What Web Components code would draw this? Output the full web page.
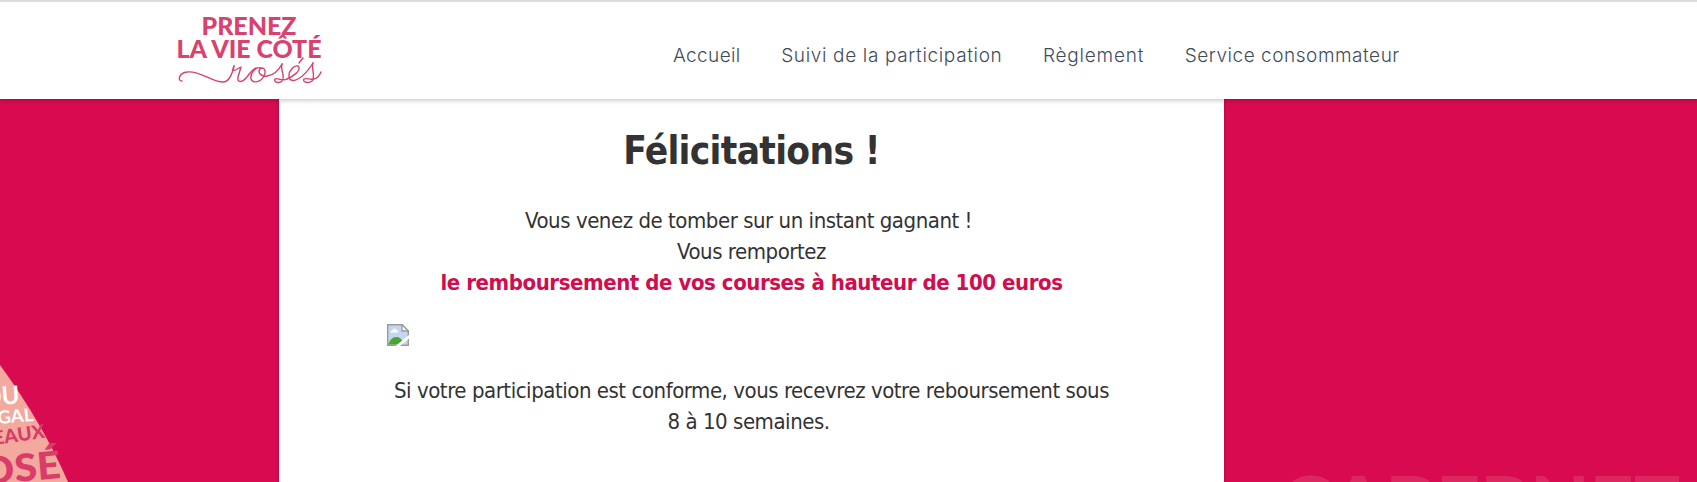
<!DOCTYPE html>
<html lang="fr">
<head>
<meta charset="utf-8">
<title>Prenez la vie côté rosés</title>
<style>
body {
  margin: 0;
  height: 482px;
  overflow: hidden;
  background: #d80b50;
}
</style>
</head>
<body>
<contest-page>
  <site-header slot="header">
    <nav-link href="#" spacing=".38px">Accueil</nav-link>
    <nav-link href="#" spacing=".65px">Suivi de la participation</nav-link>
    <nav-link href="#" spacing=".8px">Règlement</nav-link>
    <nav-link href="#" spacing=".53px">Service consommateur</nav-link>
  </site-header>
  <win-card title-text="Félicitations !">
    <text-line>Vous venez de tomber sur un instant gagnant !&nbsp;</text-line>
    <text-line>Vous remportez</text-line>
    <text-line strong>le remboursement de vos courses à hauteur de 100 euros</text-line>
    <missing-image></missing-image>
    <text-line>Si votre participation est conforme, vous recevrez votre reboursement sous</text-line>
    <text-line>8 à 10 semaines.&nbsp;</text-line>
  </win-card>
</contest-page>

<script>
class ContestPage extends HTMLElement {
  constructor() {
    super();
    this.attachShadow({ mode: "open" }).innerHTML = `
      <style>
      :host {
        display: flex;
        flex-direction: column;
        position: relative;
        height: 482px;
        overflow: hidden;
      }
      main {
        flex: 1;
        display: flex;
        padding-left: 279px;
      }
      bottle-art, grape-art {
        position: absolute;
        bottom: 0;
      }
      bottle-art { left: 0; }
      grape-art { right: 0; }
      </style>
      <bottle-art></bottle-art>
      <grape-art></grape-art>
      <slot name="header"></slot>
      <main><slot></slot></main>
    `;
  }
}

class SiteHeader extends HTMLElement {
  constructor() {
    super();
    this.attachShadow({ mode: "open" }).innerHTML = `
      <style>
      :host {
        display: flex;
        position: relative;
        z-index: 1;
        box-sizing: border-box;
        height: 99px;
        padding-left: 176px;
        border-top: 2px solid #dcdcdc;
        background: #fff;
        box-shadow: 0 1px 5px rgba(0, 0, 0, .25);
      }
      nav {
        display: flex;
        gap: 40.5px;
        margin-left: 351px;
        padding-top: 42px;
      }
      </style>
      <brand-logo></brand-logo>
      <nav><slot></slot></nav>
    `;
  }
}

class NavLink extends HTMLElement {
  constructor() {
    super();
    this.attachShadow({ mode: "open" }).innerHTML = `
      <style>
      :host { display: block; }
      a {
        color: #3f4d5a;
        font: 300 19px/24px Inter, sans-serif;
        text-decoration: none;
        white-space: nowrap;
      }
      </style>
      <a><slot></slot></a>
    `;
  }
  connectedCallback() {
    const link = this.shadowRoot.querySelector("a");
    link.href = this.getAttribute("href");
    link.style.letterSpacing = this.getAttribute("spacing");
  }
}

class BrandLogo extends HTMLElement {
  constructor() {
    super();
    this.attachShadow({ mode: "open" }).innerHTML = `
      <style>
      :host { display: block; width: 146px; height: 97px; }
      svg { display: block; }
      text { font: 900 24px Lato, sans-serif; fill: #d9416e; }
      path { fill: none; stroke: #d9416e; stroke-width: 1.4; stroke-linecap: round; stroke-linejoin: round; }
      </style>
      <svg width="146" height="97" viewBox="176 2 146 97">
        <text x="201.500" y="34.500" textLength="95" lengthAdjust="spacingAndGlyphs">PRENEZ</text>
        <text x="176.500" y="58" textLength="145" lengthAdjust="spacingAndGlyphs">LA VIE CÔTÉ</text>
        <path d="M182 81C177 81 179 73 187 72C199 70 212 82 223 82C229 82 232 75 234 66"/>
        <path d="M234 66C231 73 236 70 241 67L238 77C237 83 242 83 247 77C250 73 252 70 256 68"/>
        <path d="M261 68C256 66 250 73 251 79C253 84 261 82 264 76C267 70 263 66 260 69C257 73 262 77 267 76C274 75 279 70 282 64"/>
        <path d="M282 64C280 70 286 77 282 81C279 84 273 82 275 79C277 77 282 82 287 79"/>
        <path d="M287 79C294 76 300 71 299 67C297 63 288 70 289 77C291 85 303 79 313 63"/>
        <path d="M299 63L303 58M313 63C311 69 316 77 312 81C308 84 302 82 304 79C307 77 316 84 321 72"/>
      </svg>
    `;
  }
}

class WinCard extends HTMLElement {
  constructor() {
    super();
    this.attachShadow({ mode: "open" }).innerHTML = `
      <style>
      :host {
        display: block;
        box-sizing: border-box;
        width: 945px;
        padding: 29px 108px 0;
        background: #fff;
        box-shadow: 0 0 3px rgba(0, 0, 0, .3);
        color: #333;
        font-family: "DejaVu Sans Condensed", "DejaVu Sans", sans-serif;
        font-stretch: condensed;
      }
      h1 {
        margin: 0 0 31px;
        font-size: 38.5px;
        line-height: 46px;
        letter-spacing: -.7px;
        text-align: center;
      }
      </style>
      <h1></h1>
      <slot></slot>
    `;
  }
  connectedCallback() {
    this.shadowRoot.querySelector("h1").textContent = this.getAttribute("title-text");
  }
}

class TextLine extends HTMLElement {
  constructor() {
    super();
    this.attachShadow({ mode: "open" }).innerHTML = `
      <style>
      :host {
        display: flex;
        justify-content: center;
        font-size: 22px;
        line-height: 31px;
        letter-spacing: -.46px;
        white-space: nowrap;
      }
      :host([strong]) {
        color: #d00d4e;
        font-weight: bold;
        letter-spacing: -.44px;
      }
      </style>
      <span><slot></slot></span>
    `;
  }
}

class MissingImage extends HTMLElement {
  constructor() {
    super();
    this.attachShadow({ mode: "open" }).innerHTML = `
      <style>
      :host { display: block; padding: 26px 0 29px; }
      svg { display: block; }
      </style>
      <svg width="22" height="22" viewBox="0 0 22 22">
        <path d="M.7.700H15l6.300 6.300v14.300H.700z" fill="#c5d6f2" stroke="#9b9b9b" stroke-width="1.400"/>
        <path d="M3.500 8.500c0-2 2-2 2.500-3 1-2 3.500-1 3.500.800 2 0 2 2.200 1 2.200z" fill="#fff"/>
        <path d="M1.400 20.600c1-4 4-7.600 8-7.600 3 0 5 2 6 4l-4 3.600z" fill="#4aa52f"/>
        <path d="M15 .700v6.300h6.300z" fill="#fff" stroke="#9b9b9b" stroke-width="1.300"/>
        <path d="M8.500 22L22 11v3.500L13 22z" fill="#fff"/>
      </svg>
    `;
  }
}

// corner of the wine label, bottom left
class BottleArt extends HTMLElement {
  constructor() {
    super();
    this.attachShadow({ mode: "open" }).innerHTML = `
      <style>
      :host { display: block; }
      svg { display: block; }
      text { font-family: Lato, sans-serif; fill: #d93c69; font-weight: 900; }
      .light { fill: #fff; font-weight: 700; }
      </style>
      <svg width="80" height="122" viewBox="0 360 80 122">
        <path d="M0 365Q43 424 68 482H0z" fill="#f4a99f"/>
        <text class="light" transform="translate(-17 406) rotate(-4)" font-size="25" textLength="37" lengthAdjust="spacingAndGlyphs">OU</text>
        <text class="light" transform="translate(-2 424) rotate(-5)" font-size="18" textLength="36" lengthAdjust="spacingAndGlyphs">GAL</text>
        <text transform="translate(-6 445) rotate(-8)" font-size="19" textLength="52" lengthAdjust="spacingAndGlyphs">EAUX</text>
        <text transform="translate(-18 485) rotate(-5)" font-size="38" textLength="80" lengthAdjust="spacingAndGlyphs">OSÉ</text>
      </svg>
    `;
  }
}

// faint grape variety name cut by the bottom edge
class GrapeArt extends HTMLElement {
  constructor() {
    super();
    this.attachShadow({ mode: "open" }).innerHTML = `
      <style>
      :host { display: block; }
      svg { display: block; }
      text { font: 900 68px Lato, sans-serif; fill: #dc2860; }
      </style>
      <svg width="417" height="12" viewBox="1280 470 417 12">
        <text x="1281" y="525.500" textLength="399" lengthAdjust="spacingAndGlyphs">CABERNET</text>
      </svg>
    `;
  }
}

customElements.define("contest-page", ContestPage);
customElements.define("site-header", SiteHeader);
customElements.define("nav-link", NavLink);
customElements.define("brand-logo", BrandLogo);
customElements.define("win-card", WinCard);
customElements.define("text-line", TextLine);
customElements.define("missing-image", MissingImage);
customElements.define("bottle-art", BottleArt);
customElements.define("grape-art", GrapeArt);
</script>
</body>
</html>
